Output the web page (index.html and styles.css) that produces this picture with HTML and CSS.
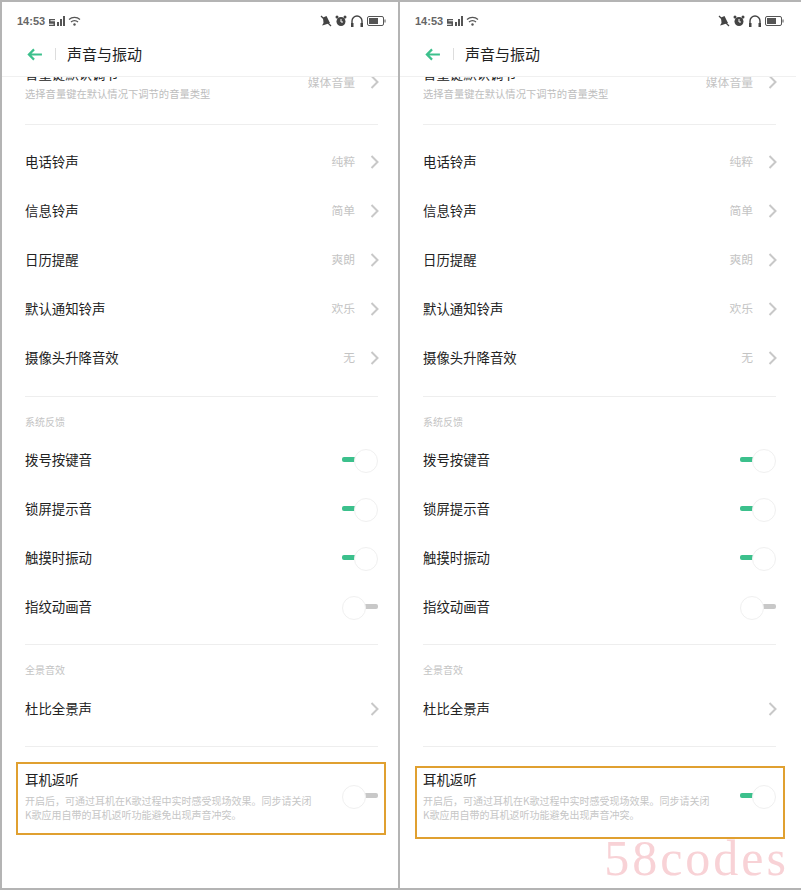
FILE: index.html
```html
<!DOCTYPE html>
<html lang="zh-CN">
<head>
    <meta charset="UTF-8">
    <meta name="viewport" content="width=device-width, initial-scale=1.0">
    <title>声音与振动</title>
    <link rel="stylesheet" href="styles.css">
</head>
<body>
    <svg class="defs" width="0" height="0">
        <symbol id="chevron" viewBox="0 0 9 14"><path d="M1.500 1 7.500 7 1.500 13" fill="none" stroke="#c8c8c8" stroke-width="2"/></symbol>
    </svg>
    <div class="frame">
        <section class="phone">
            <div class="status">
                <span class="time">14:53</span>
                <svg class="sig" viewBox="0 0 32 10" width="32" height="10"><path d="M0 3h6v1.300H1.500v1H6V10H0V8.700h4.500v-1H0zM8 6h2v4H8zM11 3h2v7h-2zM14 0h2v10h-2z" fill="#555"/><path d="M20 3.500a8 8 0 0 1 11 0M22 6a5 5 0 0 1 7 0" fill="none" stroke="#555" stroke-width="1.200"/><circle cx="25.500" cy="8.500" r="1.200" fill="#555"/></svg>
                <span class="status-right">
                    <svg viewBox="0 0 12 12" width="12" height="12"><path d="M3 2.500 6.500 1 10 8 4 10 2 10.500 3.500 8z" fill="#444"/><path d="M1 1l10 10" stroke="#444" stroke-width="1.200"/></svg>
                    <svg viewBox="0 0 12 12" width="12" height="12"><circle cx="6" cy="6.500" r="4.500" fill="#444"/><circle cx="2" cy="2" r="1.500" fill="#444"/><circle cx="10" cy="2" r="1.500" fill="#444"/><path d="M6 4v3h2" stroke="#fff" fill="none"/></svg>
                    <svg viewBox="0 0 14 14" width="14" height="14"><path d="M2 11V7a5 5 0 0 1 10 0v4" fill="none" stroke="#444" stroke-width="1.400"/><rect x="1" y="9" width="2.500" height="4" fill="#444"/><rect x="10.500" y="9" width="2.500" height="4" fill="#444"/></svg>
                    <svg viewBox="0 0 19 10" width="19" height="10"><rect x=".5" y=".5" width="16" height="9" rx="1.500" fill="none" stroke="#555"/><rect x="2" y="2" width="9" height="6" fill="#555"/><rect x="17.500" y="3.500" width="1" height="3" fill="#555"/></svg>
                </span>
            </div>
            <header class="nav">
                <svg class="back" viewBox="0 0 16 14" width="15" height="13"><path d="M7.500 1.500 2 7l5.500 5.500M2 7h14" fill="none" stroke="#3cc08c" stroke-width="2.400"/></svg>
                <span class="nav-sep"></span>
                <h1>声音与振动</h1>
            </header>
            <div class="list">
                <div class="row row-clipped">
                    <div class="row-main">
                        <div class="row-title">音量键默认调节</div>
                        <div class="row-sub">选择音量键在默认情况下调节的音量类型</div>
                    </div>
                    <span class="value">媒体音量</span>
                    <svg class="chevron"><use href="#chevron"/></svg>
                </div>
                <hr class="divider first">
                <div class="group">
                    <div class="row"><span class="row-title">电话铃声</span><span class="value">纯粹</span><svg class="chevron"><use href="#chevron"/></svg></div>
                    <div class="row"><span class="row-title">信息铃声</span><span class="value">简单</span><svg class="chevron"><use href="#chevron"/></svg></div>
                    <div class="row"><span class="row-title">日历提醒</span><span class="value">爽朗</span><svg class="chevron"><use href="#chevron"/></svg></div>
                    <div class="row"><span class="row-title">默认通知铃声</span><span class="value">欢乐</span><svg class="chevron"><use href="#chevron"/></svg></div>
                    <div class="row"><span class="row-title">摄像头升降音效</span><span class="value">无</span><svg class="chevron"><use href="#chevron"/></svg></div>
                </div>
                <hr class="divider after-group">
                <div class="section-label before-toggles">系统反馈</div>
                <div class="row"><span class="row-title">拨号按键音</span><span class="toggle on"></span></div>
                <div class="row"><span class="row-title">锁屏提示音</span><span class="toggle on"></span></div>
                <div class="row"><span class="row-title">触摸时振动</span><span class="toggle on"></span></div>
                <div class="row"><span class="row-title">指纹动画音</span><span class="toggle"></span></div>
                <hr class="divider tight">
                <div class="section-label">全景音效</div>
                <div class="row"><span class="row-title">杜比全景声</span><svg class="chevron"><use href="#chevron"/></svg></div>
                <hr class="divider tight">
                <div class="row row-monitor">
                    <div class="row-main">
                        <div class="row-title">耳机返听</div>
                        <div class="row-desc">开启后，可通过耳机在K歌过程中实时感受现场效果。同步请关闭<br>K歌应用自带的耳机返听功能避免出现声音冲突。</div>
                    </div>
                    <span class="toggle"></span>
                </div>
            </div>
            <div class="callout"></div>
        </section>

        <section class="phone">
            <div class="status">
                <span class="time">14:53</span>
                <svg class="sig" viewBox="0 0 32 10" width="32" height="10"><path d="M0 3h6v1.300H1.500v1H6V10H0V8.700h4.500v-1H0zM8 6h2v4H8zM11 3h2v7h-2zM14 0h2v10h-2z" fill="#555"/><path d="M20 3.500a8 8 0 0 1 11 0M22 6a5 5 0 0 1 7 0" fill="none" stroke="#555" stroke-width="1.200"/><circle cx="25.500" cy="8.500" r="1.200" fill="#555"/></svg>
                <span class="status-right">
                    <svg viewBox="0 0 12 12" width="12" height="12"><path d="M3 2.500 6.500 1 10 8 4 10 2 10.500 3.500 8z" fill="#444"/><path d="M1 1l10 10" stroke="#444" stroke-width="1.200"/></svg>
                    <svg viewBox="0 0 12 12" width="12" height="12"><circle cx="6" cy="6.500" r="4.500" fill="#444"/><circle cx="2" cy="2" r="1.500" fill="#444"/><circle cx="10" cy="2" r="1.500" fill="#444"/><path d="M6 4v3h2" stroke="#fff" fill="none"/></svg>
                    <svg viewBox="0 0 14 14" width="14" height="14"><path d="M2 11V7a5 5 0 0 1 10 0v4" fill="none" stroke="#444" stroke-width="1.400"/><rect x="1" y="9" width="2.500" height="4" fill="#444"/><rect x="10.500" y="9" width="2.500" height="4" fill="#444"/></svg>
                    <svg viewBox="0 0 19 10" width="19" height="10"><rect x=".5" y=".5" width="16" height="9" rx="1.500" fill="none" stroke="#555"/><rect x="2" y="2" width="9" height="6" fill="#555"/><rect x="17.500" y="3.500" width="1" height="3" fill="#555"/></svg>
                </span>
            </div>
            <header class="nav">
                <svg class="back" viewBox="0 0 16 14" width="15" height="13"><path d="M7.500 1.500 2 7l5.500 5.500M2 7h14" fill="none" stroke="#3cc08c" stroke-width="2.400"/></svg>
                <span class="nav-sep"></span>
                <h1>声音与振动</h1>
            </header>
            <div class="list">
                <div class="row row-clipped">
                    <div class="row-main">
                        <div class="row-title">音量键默认调节</div>
                        <div class="row-sub">选择音量键在默认情况下调节的音量类型</div>
                    </div>
                    <span class="value">媒体音量</span>
                    <svg class="chevron"><use href="#chevron"/></svg>
                </div>
                <hr class="divider first">
                <div class="group">
                    <div class="row"><span class="row-title">电话铃声</span><span class="value">纯粹</span><svg class="chevron"><use href="#chevron"/></svg></div>
                    <div class="row"><span class="row-title">信息铃声</span><span class="value">简单</span><svg class="chevron"><use href="#chevron"/></svg></div>
                    <div class="row"><span class="row-title">日历提醒</span><span class="value">爽朗</span><svg class="chevron"><use href="#chevron"/></svg></div>
                    <div class="row"><span class="row-title">默认通知铃声</span><span class="value">欢乐</span><svg class="chevron"><use href="#chevron"/></svg></div>
                    <div class="row"><span class="row-title">摄像头升降音效</span><span class="value">无</span><svg class="chevron"><use href="#chevron"/></svg></div>
                </div>
                <hr class="divider after-group">
                <div class="section-label before-toggles">系统反馈</div>
                <div class="row"><span class="row-title">拨号按键音</span><span class="toggle on"></span></div>
                <div class="row"><span class="row-title">锁屏提示音</span><span class="toggle on"></span></div>
                <div class="row"><span class="row-title">触摸时振动</span><span class="toggle on"></span></div>
                <div class="row"><span class="row-title">指纹动画音</span><span class="toggle"></span></div>
                <hr class="divider tight">
                <div class="section-label">全景音效</div>
                <div class="row"><span class="row-title">杜比全景声</span><svg class="chevron"><use href="#chevron"/></svg></div>
                <hr class="divider tight">
                <div class="row row-monitor">
                    <div class="row-main">
                        <div class="row-title">耳机返听</div>
                        <div class="row-desc">开启后，可通过耳机在K歌过程中实时感受现场效果。同步请关闭<br>K歌应用自带的耳机返听功能避免出现声音冲突。</div>
                    </div>
                    <span class="toggle on"></span>
                </div>
            </div>
            <div class="callout lower"></div>
            <div class="watermark">58codes</div>
        </section>
    </div>
</body>
</html>
```

FILE: styles.css
```css
* {
    box-sizing: border-box;
}
html, body {
    margin: 0;
    height: 100%;
}
body {
    font-family: "Noto Sans CJK SC", "Liberation Sans", sans-serif;
    background: #fff;
}
.defs {
    display: block;
}
.frame {
    width: 801px;
    height: 890px;
    display: grid;
    grid-template-columns: 398px 396px;
    background: #fff;
    border-top: 2px solid #b4b4b4;
    border-bottom: 2px solid #b4b4b4;
    border-left: 2px solid #b4b4b4;
}
.phone {
    position: relative;
    height: 886px;
}
.phone:first-child {
    border-right: 2px solid #b4b4b4;
}

/* status bar */
.status {
    height: 36px;
    padding: 2px 12px 0 15px;
    display: flex;
    align-items: center;
    gap: 4px;
}
.time {
    font-family: "Liberation Sans", sans-serif;
    font-size: 11px;
    font-weight: 700;
    color: #666;
}
.status-right {
    margin-left: auto;
    display: flex;
    align-items: center;
    gap: 3px;
}

/* title bar */
.nav {
    height: 39px;
    padding: 0 0 6px 25px;
    display: flex;
    align-items: center;
    border-bottom: 1px solid #f0f0f0;
}
.nav-sep {
    width: 1px;
    height: 12px;
    background: #ddd;
    margin: 0 11px 0 13px;
}
.nav h1 {
    margin: 0;
    padding-bottom: 2px;
    font-size: 15px;
    font-weight: 400;
    color: #222;
}

/* settings list */
.list {
    height: 811px;
    overflow: hidden;
    padding: 0 20px 0 23px;
}
.row {
    height: 49px;
    display: flex;
    align-items: center;
    color: #222;
}
.row-main {
    flex: 1;
    min-width: 0;
}
.row-title {
    font-size: 13.400px;
    line-height: 18px;
    padding-bottom: 2px;
    margin-right: auto;
}
.row-clipped {
    height: 38px;
    margin-top: -14px;
}
.row-sub {
    font-size: 10.300px;
    line-height: 14px;
    margin-top: 3px;
    color: #bdbdbd;
}
.value {
    font-size: 11.800px;
    padding-bottom: 2px;
    color: #c4c4c4;
    margin-right: 15px;
}
.chevron {
    width: 9px;
    height: 14px;
    flex: none;
    margin-right: -1px;
}
.divider {
    border: 0;
    border-top: 1px solid #eee;
    margin: 0;
}
.divider.first {
    margin: 23px 0 12px;
}
.divider.after-group {
    margin: 14px 0 18px;
}
.divider.tight {
    margin: 13px 0 18px;
}
.section-label {
    font-size: 10px;
    line-height: 14px;
    color: #c4c4c4;
    margin-bottom: 7px;
}
.section-label.before-toggles {
    margin-bottom: 6px;
}
.row-monitor {
    height: 65px;
    padding-top: 5px;
    align-items: flex-start;
}
.row-desc {
    font-size: 10px;
    line-height: 14px;
    color: #c6c6c6;
    margin-top: 4px;
    white-space: nowrap;
}

/* toggle: short bar with a white knob */
.toggle {
    position: relative;
    flex: none;
    width: 36px;
    height: 22px;
    margin-left: auto;
}
.row-monitor .toggle {
    margin-top: 15px;
}
.toggle::before {
    content: "";
    position: absolute;
    right: 0;
    top: 8px;
    width: 14px;
    height: 5px;
    border-radius: 2px;
    background: #c8c8c8;
}
.toggle::after {
    content: "";
    position: absolute;
    left: 0;
    top: 0;
    width: 22px;
    height: 22px;
    border-radius: 50%;
    background: #fff;
    border: 1px solid #f0f0f0;
}
.toggle.on::before {
    left: 0;
    right: auto;
    background: #3cc08c;
}
.toggle.on::after {
    left: auto;
    right: 0;
}

/* annotation overlays */
.callout {
    position: absolute;
    left: 14px;
    top: 760px;
    width: 370px;
    height: 73px;
    border: 2px solid #e0a030;
}
.callout.lower {
    top: 764px;
    left: 15px;
}
.watermark {
    position: absolute;
    right: 7px;
    top: 831px;
    font-family: "Liberation Serif", serif;
    font-size: 50px;
    letter-spacing: 3px;
    line-height: 1;
    color: #f8d2d6;
}
```
